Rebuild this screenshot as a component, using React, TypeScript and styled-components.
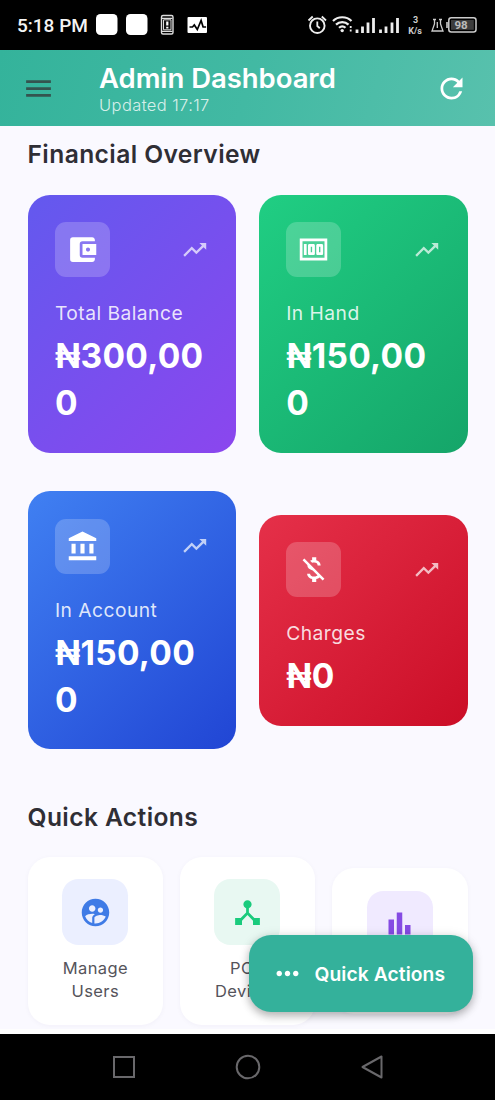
import React from 'react';
import styled, { createGlobalStyle } from 'styled-components';
import {
  MdAccountBalance,
  MdAccountBalanceWallet,
  MdBarChart,
  MdDeviceHub,
  MdMenu,
  MdMoney,
  MdMoneyOff,
  MdMoreHoriz,
  MdRefresh,
  MdSupervisedUserCircle,
  MdTrendingUp,
} from 'react-icons/md';

const GlobalStyle = createGlobalStyle`
  * { box-sizing: border-box; }
  body {
    margin: 0;
    font-family: Inter, Roboto, sans-serif;
    background: #000;
  }
  svg { display: block; flex: none; }
`;

const Screen = styled.div`
  position: relative;
  display: flex;
  flex-direction: column;
  width: 495px;
  height: 1100px;
  overflow: hidden;
  background: #faf9ff;
`;

const StatusBar = styled.div`
  flex: none;
  display: flex;
  align-items: center;
  justify-content: space-between;
  height: 50px;
  padding: 0 17px;
  background: #000;
  color: #f4f4f4;
  font-family: Roboto, sans-serif;
`;

const StatusLeft = styled.div`
  display: flex;
  align-items: center;
`;

const Clock = styled.span`
  width: 79px;
  padding-top: 2px;
  font-size: 19px;
  font-weight: 500;
  white-space: nowrap;
  line-height: 50px;
`;

const Header = styled.header`
  flex: none;
  display: flex;
  align-items: center;
  height: 76px;
  padding: 0 27px 0 22px;
  background: linear-gradient(105deg, #34b39b 0%, #42b9a3 50%, #58c1ad 100%);
  color: #fff;
`;

const HeaderText = styled.div`
  flex: 1;
  margin-left: 44px;
  padding-top: 2px;
`;

const Title = styled.h1`
  margin: 0;
  font-size: 27.5px;
  line-height: 32px;
  font-weight: 600;
  letter-spacing: -0.05px;
  white-space: nowrap;
`;

const Updated = styled.div`
  font-size: 16.5px;
  line-height: 22px;
  font-weight: 300;
  letter-spacing: 0.4px;
  color: rgba(255, 255, 255, 0.8);
`;

const Content = styled.main`
  flex: 1;
  min-height: 0;
  padding: 11px 27.5px 0;
  overflow: hidden;
  border-bottom: 5px solid #fefefe;
`;

const SectionTitle = styled.h2`
  margin: 0;
  font-size: 24.6px;
  line-height: 34px;
  font-weight: 600;
  letter-spacing: 0.4px;
  color: #2f2e35;
`;

const BalanceGrid = styled.div`
  display: grid;
  grid-template-columns: 1fr 1fr;
  gap: 38.5px 22.5px;
  align-items: center;
  margin: 23.5px 0 51px;
`;

const BalanceCard = styled.article<{ $from: string; $to: string }>`
  padding: 27.5px 27.5px 25.5px;
  border-radius: 22px;
  background: linear-gradient(135deg, ${(p) => p.$from}, ${(p) => p.$to});
  color: #fff;
`;

const CardTop = styled.div`
  display: flex;
  align-items: center;
  justify-content: space-between;
  margin-bottom: 23px;
  color: rgba(255, 255, 255, 0.7);
`;

const IconBox = styled.div`
  display: grid;
  place-items: center;
  width: 55px;
  height: 55px;
  border-radius: 11px;
  background: rgba(255, 255, 255, 0.2);
  color: #fff;
`;

const CardLabel = styled.div`
  font-size: 19.25px;
  line-height: 27px;
  letter-spacing: 0.45px;
  color: rgba(255, 255, 255, 0.85);
`;

const Amount = styled.div`
  margin-top: 6px;
  font-size: 33.5px;
  line-height: 47px;
  font-weight: 700;
  letter-spacing: 0.25px;
  word-break: break-all;
`;

const ActionGrid = styled.div`
  display: grid;
  grid-template-columns: repeat(3, 1fr);
  gap: 16.5px;
  align-items: center;
  margin-top: 22.5px;
`;

const ActionCard = styled.article`
  display: flex;
  flex-direction: column;
  align-items: center;
  padding: 22.5px 22px 21.5px;
  border-radius: 22px;
  background: #fff;
  box-shadow: 0 1px 5px rgba(40, 30, 90, 0.04);
`;

const ActionIcon = styled.div<{ $tint: string; $color: string }>`
  display: grid;
  place-items: center;
  width: 66px;
  height: 66px;
  margin-bottom: 12px;
  border-radius: 16.5px;
  background: ${(p) => p.$tint};
  color: ${(p) => p.$color};
`;

const ActionLabel = styled.div`
  font-size: 16.5px;
  line-height: 23.4px;
  letter-spacing: 0.4px;
  text-align: center;
  color: #55545b;
`;

const Fab = styled.button`
  position: absolute;
  left: 248.5px;
  top: 935px;
  display: flex;
  align-items: center;
  gap: 11px;
  width: 224px;
  height: 77px;
  padding: 0 0 0 22px;
  border: 0;
  border-radius: 22px;
  background: #34b19b;
  box-shadow: 0 4px 8px rgba(0, 0, 0, 0.25), 0 1px 12px rgba(0, 0, 0, 0.1);
  color: #fff;
  font: 600 19.25px Inter, sans-serif;
  letter-spacing: 0.08px;
  white-space: nowrap;
`;

const NavBar = styled.nav`
  flex: none;
  height: 66px;
  background: #000;
  display: flex;
  justify-content: center;
  align-items: center;
  gap: 98px;
`;

const BALANCES = [
  { label: 'Total Balance', amount: '₦300,000', from: '#6359ee', to: '#8b46ee', Icon: MdAccountBalanceWallet },
  { label: 'In Hand', amount: '₦150,000', from: '#20ce83', to: '#15a569', Icon: MdMoney },
  { label: 'In Account', amount: '₦150,000', from: '#4080f2', to: '#2145d4', Icon: MdAccountBalance },
  { label: 'Charges', amount: '₦0', from: '#e53049', to: '#cb0e27', Icon: MdMoneyOff },
];

const ACTIONS = [
  { label: 'Manage Users', tint: '#ebefff', color: '#3f7be6', Icon: MdSupervisedUserCircle },
  { label: 'POS Devices', tint: '#e8f8f2', color: '#1acb7d', Icon: MdDeviceHub },
  { label: 'Reports', tint: '#f0eaff', color: '#854be3', Icon: MdBarChart },
];

const NotificationIcons = () => (
  <svg width="112" height="24" viewBox="0 0 112 24" fill="#fff">
    <rect x="0" y="1" width="21.500" height="21" rx="4.500" />
    <rect x="30" y="1" width="21.500" height="21" rx="4.500" />
    <rect x="65.500" y="2.500" width="11.500" height="18.500" rx="1.500" fill="none" stroke="#ddd" strokeWidth="1.400" />
    <path d="M66 5.300h10.500M66 18.300h10.500" stroke="#ddd" strokeWidth="1.200" />
    <path d="M67.500 6.800h7.500v10h-7.500z" fill="#111" stroke="#ddd" strokeWidth="1" />
    <path d="M71.300 8.500v4M71.300 13.700v1.800" stroke="#fff" strokeWidth="2.200" />
    <rect x="91.500" y="4" width="19.500" height="16" rx="1" />
    <path d="M93.500 14h3l1.800-2 3 4.500 3.800-9 2 6.500h3" fill="none" stroke="#000" strokeWidth="1.700" />
  </svg>
);

const SystemIcons = () => (
  <svg width="171" height="24" viewBox="308 13 171 24" fill="none" stroke="#eee">
    <circle cx="318.300" cy="25.700" r="7.300" strokeWidth="1.900" />
    <path d="M318.300 21.500v4.500l2.500 2.200M309.500 20.500l4.200-4M327 20.500l-4.200-4" strokeWidth="1.800" />
    <path d="M334 21c5-5 13.500-5 18.500 0M337 24.600c3.500-3.400 9-3.400 12.500 0M340 27.800c2-1.800 4.500-1.800 6.500 0" strokeWidth="2.200" />
    <circle cx="343.200" cy="30.600" r="1.700" fill="#eee" stroke="none" />
    <path d="M351.700 26v2M351.700 29.500v2" strokeWidth="1.800" />
    <path d="M358 29.500V33M363.500 26.500V33M369 22.500V33M374.500 18V33M381.500 29.500V33M387 26.500V33M393 22.500V33M398.500 18V33" strokeWidth="2.800" />
    <g fill="#ccc" stroke="none" fontFamily="Roboto, sans-serif" fontWeight="700" textAnchor="middle">
      <text x="416.500" y="22.500" fontSize="9">3</text>
      <text x="416" y="33.500" fontSize="9">K/s</text>
      <text x="462" y="29" fontSize="11.500" fill="#fff">98</text>
    </g>
    <path d="M434 19.500h3M440 19.500h3M435.500 20v4l-2.500 7h11l-2.500-7v-4M438.300 22v6" strokeWidth="1.300" stroke="#ccc" />
    <rect x="449.800" y="17.800" width="27.200" height="14.200" rx="2.500" strokeWidth="1.500" stroke="#ccc" />
    <rect x="452" y="20" width="22.800" height="9.800" fill="#777" fillOpacity=".5" stroke="none" />
    <path d="M448 22v6" strokeWidth="1.600" stroke="#ccc" />
  </svg>
);

export default function App() {
  return (
    <Screen>
      <GlobalStyle />
      <StatusBar>
        <StatusLeft>
          <Clock>5:18 PM</Clock>
          <NotificationIcons />
        </StatusLeft>
        <SystemIcons />
      </StatusBar>
      <Header>
        <MdMenu size={33} color="#34544f" />
        <HeaderText>
          <Title>Admin Dashboard</Title>
          <Updated>Updated 17:17</Updated>
        </HeaderText>
        <MdRefresh size={33} />
      </Header>
      <Content>
        <SectionTitle>Financial Overview</SectionTitle>
        <BalanceGrid>
          {BALANCES.map(({ label, amount, from, to, Icon }) => (
            <BalanceCard key={label} $from={from} $to={to}>
              <CardTop>
                <IconBox>
                  <Icon size={33} />
                </IconBox>
                <MdTrendingUp size={27.5} />
              </CardTop>
              <CardLabel>{label}</CardLabel>
              <Amount>{amount}</Amount>
            </BalanceCard>
          ))}
        </BalanceGrid>
        <SectionTitle>Quick Actions</SectionTitle>
        <ActionGrid>
          {ACTIONS.map(({ label, tint, color, Icon }) => (
            <ActionCard key={label}>
              <ActionIcon $tint={tint} $color={color}>
                <Icon size={33} />
              </ActionIcon>
              <ActionLabel>{label}</ActionLabel>
            </ActionCard>
          ))}
        </ActionGrid>
      </Content>
      <NavBar>
        <svg width="26" height="26" viewBox="0 0 26 26" fill="none" stroke="#69686b" strokeWidth="2">
          <rect x="3" y="3" width="20" height="20" />
        </svg>
        <svg width="26" height="26" viewBox="0 0 26 26" fill="none" stroke="#69686b" strokeWidth="2">
          <circle cx="13" cy="13" r="11.300" />
        </svg>
        <svg width="26" height="26" viewBox="0 0 26 26" fill="none" stroke="#69686b" strokeWidth="2" strokeLinejoin="round">
          <path d="M22.500 2.500v21L3.500 13z" />
        </svg>
      </NavBar>
      <Fab>
        <MdMoreHoriz size={33} />
        Quick Actions
      </Fab>
    </Screen>
  );
}
